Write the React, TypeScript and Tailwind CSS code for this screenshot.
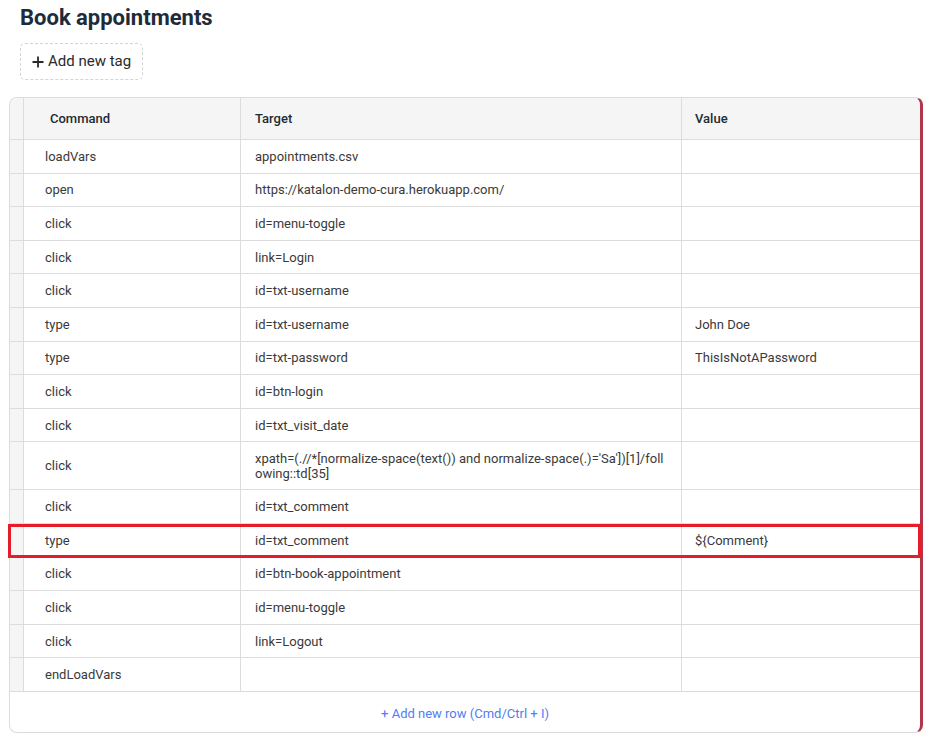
import React from 'react';

const rows = [
  { cmd: 'loadVars', target: ['appointments.csv'], value: '' },
  { cmd: 'open', target: ['https://katalon-demo-cura.herokuapp.com/'], value: '' },
  { cmd: 'click', target: ['id=menu-toggle'], value: '' },
  { cmd: 'click', target: ['link=Login'], value: '' },
  { cmd: 'click', target: ['id=txt-username'], value: '' },
  { cmd: 'type', target: ['id=txt-username'], value: 'John Doe' },
  { cmd: 'type', target: ['id=txt-password'], value: 'ThisIsNotAPassword' },
  { cmd: 'click', target: ['id=btn-login'], value: '' },
  { cmd: 'click', target: ['id=txt_visit_date'], value: '' },
  {
    cmd: 'click',
    target: ["xpath=(.//*[normalize-space(text()) and normalize-space(.)='Sa'])[1]/foll", 'owing::td[35]'],
    value: '',
    tall: true,
  },
  { cmd: 'click', target: ['id=txt_comment'], value: '' },
  { cmd: 'type', target: ['id=txt_comment'], value: '${Comment}', highlight: true },
  { cmd: 'click', target: ['id=btn-book-appointment'], value: '' },
  { cmd: 'click', target: ['id=menu-toggle'], value: '' },
  { cmd: 'click', target: ['link=Logout'], value: '' },
  { cmd: 'endLoadVars', target: [], value: '' },
];

export default function App() {
  return (
    <div className="min-h-screen bg-white font-['Roboto',sans-serif] text-[13px] text-[#3a3a3a]">
      <div className="pl-5 pt-[4px]">
        <h1 className="text-[22px] font-bold leading-[28px] text-[#1d2b3a]">Book appointments</h1>
        <button className="mt-[11px] flex h-[37px] items-center gap-[4px] rounded-[5px] border border-dashed border-[#d4d4d4] px-[11px] text-[15px] text-[#2a2a2a]">
          <svg width="12" height="12" viewBox="0 0 12 12" fill="none">
            <path d="M6 0.5v11M0.5 6h11" stroke="#2a2a2a" strokeWidth="1.8" />
          </svg>
          Add new tag
        </button>
      </div>

      {/* Command table */}
      <div className="ml-[9px] mr-[8px] mt-[17px] rounded-[8px] border border-r-[3px] border-[#dcdcdc] border-r-[#b3354d]">
        <div className="flex h-[42px] rounded-t-[7px] border-b border-[#dcdcdc] bg-[#f5f5f5] font-medium text-[#222b36]">
          <div className="w-[14px] shrink-0 rounded-tl-[7px] border-r border-[#dcdcdc]" />
          <div className="flex w-[217px] shrink-0 items-center border-r border-[#dcdcdc] pl-[26px]">Command</div>
          <div className="flex w-[441px] shrink-0 items-center border-r border-[#dcdcdc] pl-[14px]">Target</div>
          <div className="flex flex-1 items-center pl-[13px]">Value</div>
        </div>

        {rows.map((r, i) => (
          <div
            key={i}
            className={`relative flex border-b border-[#dcdcdc] leading-[15px] ${r.tall ? 'h-[48px]' : 'h-[33.6px]'}`}
          >
            <div className="w-[14px] shrink-0 border-r border-[#dcdcdc] bg-[#f5f5f5]" />
            <div className="flex w-[217px] shrink-0 items-center border-r border-[#dcdcdc] pl-[21px]">{r.cmd}</div>
            <div className="flex w-[441px] shrink-0 flex-col justify-center border-r border-[#dcdcdc] pl-[14px]">
              {r.target.map((t, j) => (
                <span key={j}>{t}</span>
              ))}
            </div>
            <div className="flex flex-1 items-center pl-[13px]">{r.value}</div>
            {r.highlight && (
              <div className="pointer-events-none absolute -left-[2px] -right-[1px] top-0 -bottom-[1px] border-[3px] border-[#e51d2a]" />
            )}
          </div>
        ))}

        <div className="flex h-[40px] items-center justify-center pt-[3px] text-[13px] text-[#4f7df5]">
          + Add new row (Cmd/Ctrl + I)
        </div>
      </div>
    </div>
  );
}
